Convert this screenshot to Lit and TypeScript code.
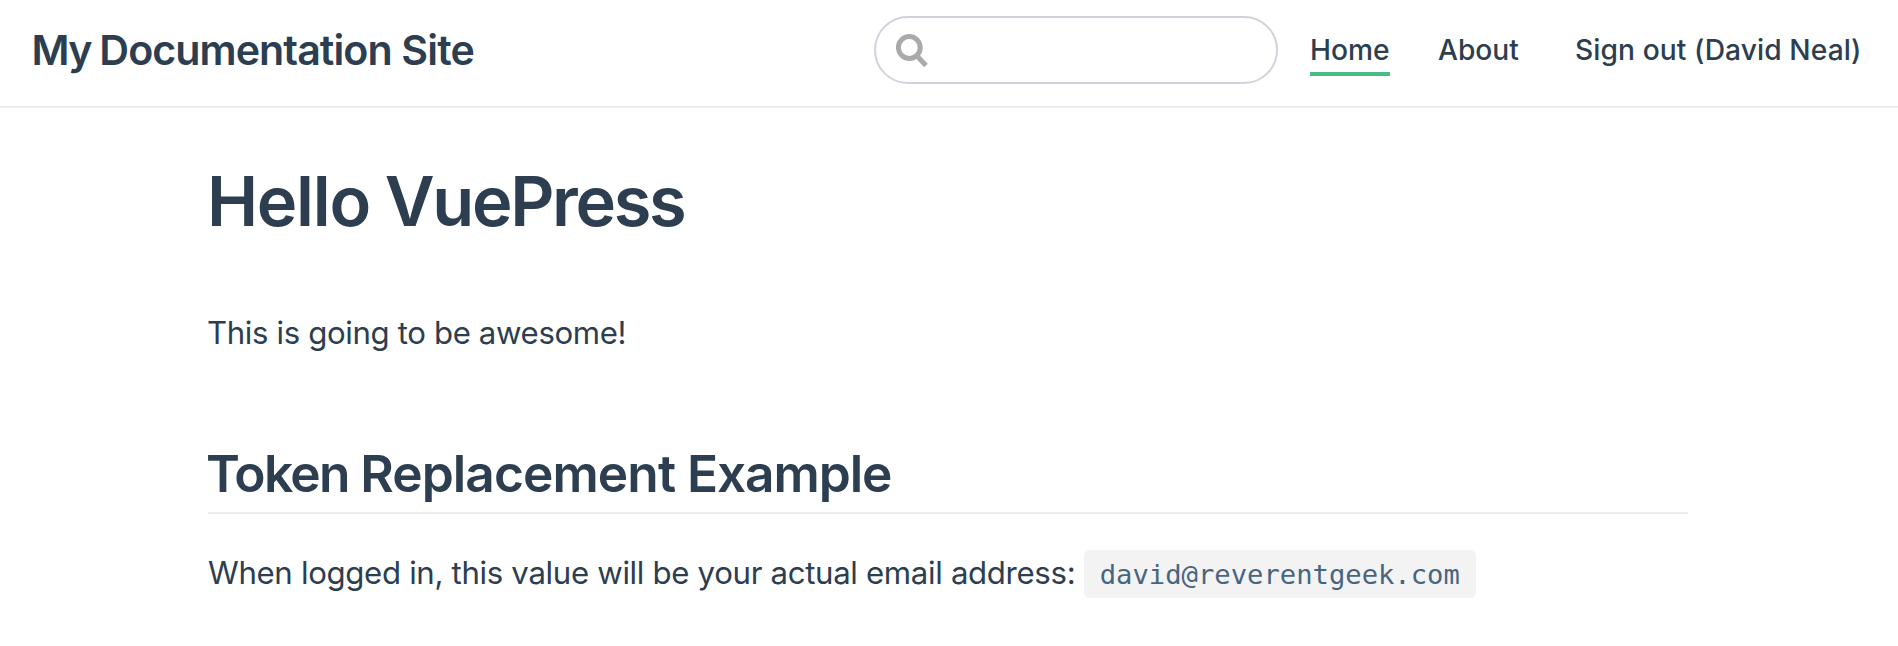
import { LitElement, html, css } from "lit";

class AppRoot extends LitElement {
  static styles = css`
    :host {
      display: block;
      min-height: 100vh;
      background: #fff;
      color: #2c3e50;
      font-family: Inter, "Liberation Sans", sans-serif;
      font-size: 31.2px;
    }
    .navbar {
      display: flex;
      align-items: center;
      box-sizing: border-box;
      height: 108px;
      padding: 16px 37px 22px 31.5px;
      border-bottom: 2px solid #eaecef;
      white-space: nowrap;
    }
    .site {
      margin-right: auto;
      font-size: 41.2px;
      font-weight: 600;
      line-height: 68px;
      letter-spacing: -0.8px;
    }
    .site-my {
      letter-spacing: -1.7px;
    }
    .site-doc {
      letter-spacing: -0.95px;
    }
    .search {
      display: flex;
      align-items: flex-start;
      box-sizing: border-box;
      width: 404px;
      height: 68px;
      margin-right: 32px;
      padding: 16px 20px;
      border: 2px solid #cfd4db;
      border-radius: 34px;
    }
    .glass {
      display: block;
      width: 32px;
      height: 34px;
    }
    .links {
      display: flex;
      font-size: 28.2px;
      font-weight: 500;
      line-height: 44px;
    }
    .link {
      color: inherit;
      text-decoration: none;
    }
    .home {
      width: 80px;
      margin: 0 48px -4px 0;
      border-bottom: 4px solid #46bd87;
    }
    .about {
      width: 80px;
      margin-right: 57px;
      letter-spacing: -0.05px;
    }
    .account {
      width: 286px;
      letter-spacing: 0.08px;
    }
    .content {
      width: 1480px;
      padding: 51px 0 0 208px;
    }
    h1 {
      margin: 0 0 61px -1px;
      font-size: 68.6px;
      font-weight: 600;
      line-height: 86px;
      letter-spacing: -2.35px;
    }
    .hello {
      letter-spacing: -1.3px;
    }
    p {
      margin: 0;
      line-height: 54px;
      letter-spacing: -0.33px;
      white-space: nowrap;
    }
    .intro {
      letter-spacing: -0.37px;
      text-indent: -1px;
    }
    h2 {
      margin: 81px 0 32px;
      padding-bottom: 7px;
      border-bottom: 2px solid #eaecef;
      font-size: 51.4px;
      font-weight: 600;
      line-height: 64px;
      letter-spacing: -1.1px;
      text-indent: -2px;
    }
    .token {
      letter-spacing: -1.65px;
    }
    .replacement {
      letter-spacing: -0.9px;
    }
    code {
      padding: 9px 16px 8px;
      border-radius: 6px;
      background: #f3f3f3;
      color: #476582;
      font-family: "DejaVu Sans Mono", monospace;
      font-size: 27.2px;
      letter-spacing: 0;
    }
  `;

  render() {
    return html`
      <header class="navbar">
        <span class="site"><span class="site-my">My </span><span class="site-doc">Documentation</span> Site</span>
        <div class="search" role="search">
          <svg class="glass" viewBox="0 0 32 34" aria-hidden="true">
            <g fill="none" stroke="#aaa" stroke-width="5">
              <circle cx="13.3" cy="13.5" r="10.9" />
              <path d="M20.4 21.4L30 31.5" />
            </g>
          </svg>
        </div>
        <nav class="links">
          <a class="link home">Home</a>
          <a class="link about">About</a>
          <a class="link account">Sign out (David Neal)</a>
        </nav>
      </header>
      <main class="content">
        <h1><span class="hello">Hello</span> VuePress</h1>
        <p class="intro">This is going to be awesome!</p>
        <h2><span class="token">Token </span><span class="replacement">Replacement</span> Example</h2>
        <p>When logged in, this value will be your actual email address: <code>david@reverentgeek.com</code></p>
      </main>
    `;
  }
}

customElements.define("app-root", AppRoot);
